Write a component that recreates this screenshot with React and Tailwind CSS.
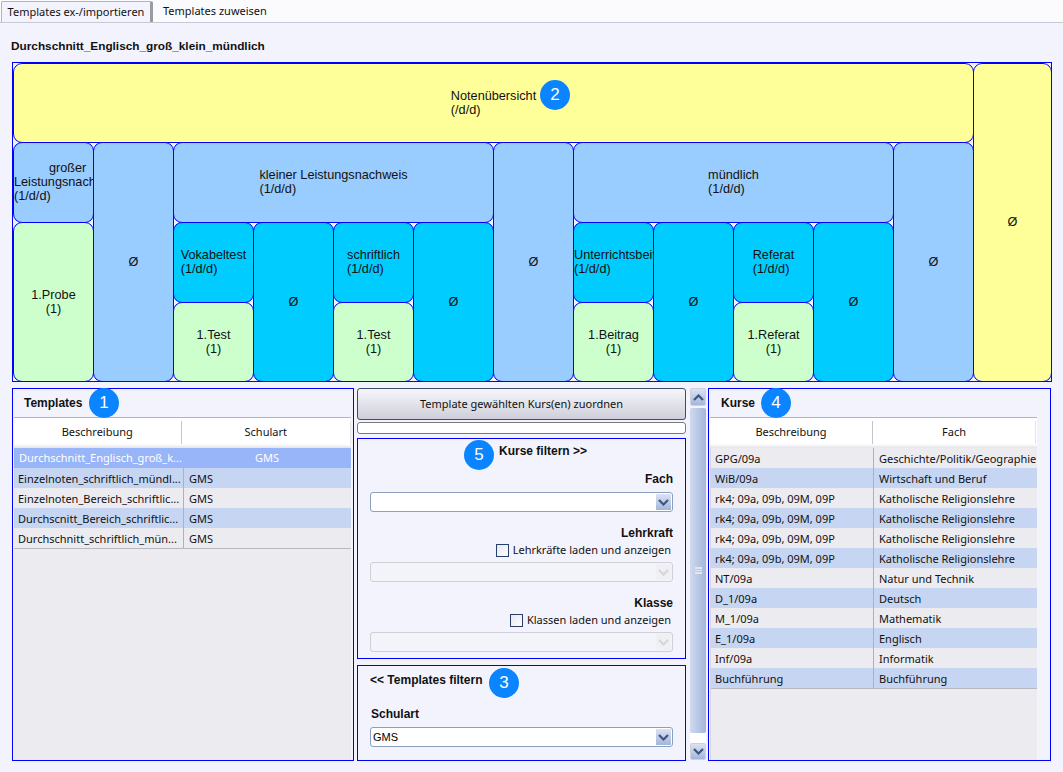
import React from "react"

const cells = [
  { lines: ["Notenübersicht", "(/d/d)"], pos: "col-start-1 col-end-13 row-start-1", bg: "bg-[#ffff99]" },
  { lines: ["Ø"], pos: "col-start-13 row-start-1 row-end-5", bg: "bg-[#ffff99]", center: true },
  { lines: ["großer", "Leistungsnachweis", "(1/d/d)"], pos: "col-start-1 row-start-2", bg: "bg-[#99ccff]", clip: true, first: true },
  { lines: ["Ø"], pos: "col-start-2 row-start-2 row-end-5", bg: "bg-[#99ccff]", center: true },
  { lines: ["kleiner Leistungsnachweis", "(1/d/d)"], pos: "col-start-3 col-end-7 row-start-2", bg: "bg-[#99ccff]" },
  { lines: ["Ø"], pos: "col-start-7 row-start-2 row-end-5", bg: "bg-[#99ccff]", center: true },
  { lines: ["mündlich", "(1/d/d)"], pos: "col-start-8 col-end-12 row-start-2", bg: "bg-[#99ccff]" },
  { lines: ["Ø"], pos: "col-start-12 row-start-2 row-end-5", bg: "bg-[#99ccff]", center: true },
  { lines: ["1.Probe", "(1)"], pos: "col-start-1 row-start-3 row-end-5", bg: "bg-[#ccffcc]", center: true },
  { lines: ["Vokabeltest", "(1/d/d)"], pos: "col-start-3 row-start-3", bg: "bg-[#00ccff]" },
  { lines: ["Ø"], pos: "col-start-4 row-start-3 row-end-5", bg: "bg-[#00ccff]", center: true },
  { lines: ["schriftlich", "(1/d/d)"], pos: "col-start-5 row-start-3", bg: "bg-[#00ccff]" },
  { lines: ["Ø"], pos: "col-start-6 row-start-3 row-end-5", bg: "bg-[#00ccff]", center: true },
  { lines: ["Unterrichtsbeitrag", "(1/d/d)"], pos: "col-start-8 row-start-3", bg: "bg-[#00ccff]", clip: true },
  { lines: ["Ø"], pos: "col-start-9 row-start-3 row-end-5", bg: "bg-[#00ccff]", center: true },
  { lines: ["Referat", "(1/d/d)"], pos: "col-start-10 row-start-3", bg: "bg-[#00ccff]" },
  { lines: ["Ø"], pos: "col-start-11 row-start-3 row-end-5", bg: "bg-[#00ccff]", center: true },
  { lines: ["1.Test", "(1)"], pos: "col-start-3 row-start-4", bg: "bg-[#ccffcc]", center: true },
  { lines: ["1.Test", "(1)"], pos: "col-start-5 row-start-4", bg: "bg-[#ccffcc]", center: true },
  { lines: ["1.Beitrag", "(1)"], pos: "col-start-8 row-start-4", bg: "bg-[#ccffcc]", center: true },
  { lines: ["1.Referat", "(1)"], pos: "col-start-10 row-start-4", bg: "bg-[#ccffcc]", center: true },
]

const templates = [
  ["Einzelnoten_schriftlich_mündl...", "GMS"],
  ["Einzelnoten_Bereich_schriftlic...", "GMS"],
  ["Durchscnitt_Bereich_schriftlic...", "GMS"],
  ["Durchschnitt_schriftlich_mün...", "GMS"],
]

const kurse = [
  ["GPG/09a", "Geschichte/Politik/Geographie"],
  ["WiB/09a", "Wirtschaft und Beruf"],
  ["rk4; 09a, 09b, 09M, 09P", "Katholische Religionslehre"],
  ["rk4; 09a, 09b, 09M, 09P", "Katholische Religionslehre"],
  ["rk4; 09a, 09b, 09M, 09P", "Katholische Religionslehre"],
  ["rk4; 09a, 09b, 09M, 09P", "Katholische Religionslehre"],
  ["NT/09a", "Natur und Technik"],
  ["D_1/09a", "Deutsch"],
  ["M_1/09a", "Mathematik"],
  ["E_1/09a", "Englisch"],
  ["Inf/09a", "Informatik"],
  ["Buchführung", "Buchführung"],
]

function Badge({ n, className }) {
  return (
    <div className={"absolute flex h-[30px] w-[30px] items-center justify-center rounded-full bg-[#0a84ff] font-['Liberation_Sans',sans-serif] text-[17px] font-normal text-white " + className}>
      {n}
    </div>
  )
}

function Chevron({ up, color = "#3f5580" }) {
  return (
    <svg width="11" height="7" viewBox="0 0 11 7">
      <polyline points={up ? "1,6 5.5,1.5 10,6" : "1,1 5.5,5.5 10,1"} fill="none" stroke={color} strokeWidth="2.2" />
    </svg>
  )
}

function Select({ value, disabled }) {
  return (
    <div className={disabled
      ? "flex h-5 w-[303px] items-center justify-end rounded-[3px] border border-[#cfcfd8] bg-[#f3f3fa] pr-px"
      : "flex h-5 w-[303px] items-center justify-between rounded-[3px] border border-[#8ba0c0] bg-white pr-px"}>
      <span className="pl-[2px] font-['Liberation_Sans',sans-serif] text-[11px] font-normal text-black">{value}</span>
      <div className={disabled
        ? "flex h-[16px] w-[15px] items-center justify-center bg-[#f0f0f4]"
        : "flex h-[16px] w-[15px] items-center justify-center bg-gradient-to-b from-[#dbe3f3] to-[#a4b6da]"}>
        <Chevron color={disabled ? "#d4d4dc" : "#3f5580"} />
      </div>
    </div>
  )
}

function TableHead({ first, second, firstW, secondW }) {
  return (
    <div className="flex h-[31px] border-t border-[#b4b4c0] bg-white pt-[3px] text-[11px] shadow-[inset_0_-4px_3px_-2px_#e4e4ea]">
      <div className={"flex h-[23px] items-center justify-center border-r border-[#c4c4cc] " + firstW}>{first}</div>
      <div className={"flex h-[23px] items-center justify-center border-r border-[#e4e4ea] " + secondW}>{second}</div>
    </div>
  )
}

function Row({ a, b, odd, firstW, padA }) {
  return (
    <div className={odd ? "flex h-5 items-center bg-[#ecebf0]" : "flex h-5 items-center bg-[#c6d6f2]"}>
      <div className={"flex h-5 items-center overflow-hidden whitespace-nowrap border-r border-[#b0b0b8] pt-[2px] " + padA + " " + firstW}>{a}</div>
      <div className="flex h-5 flex-1 items-center overflow-hidden whitespace-nowrap pl-[5px] pt-[2px]">{b}</div>
    </div>
  )
}

function Cell({ cell }) {
  const justify = cell.center ? "justify-center text-center" : cell.clip ? "justify-start" : "justify-center"
  return (
    <div className={"-mb-px -mr-px flex items-center overflow-hidden rounded-[9px] border border-[#0000ff] pb-px text-[12.7px] leading-[14px] text-[#111] " + cell.pos + " " + cell.bg + " " + justify}>
      <div className="shrink-0 whitespace-pre">
        {cell.lines.map((line, i) => (
          <div key={i} className={cell.first && i === 0 ? "text-center" : ""}>{line}</div>
        ))}
      </div>
    </div>
  )
}

export default function App() {
  return (
    <div className="relative flex h-[772px] w-[1063px] flex-col overflow-hidden bg-[#f3f3fd] font-['Noto_Sans',sans-serif] text-[11px] text-[#111]">
      {/* tabs */}
      <div className="flex h-[23px] items-end border-b border-[#c9c9d6] bg-[#fbfbfd] pl-px">
        <div className="flex h-[21px] w-[152px] items-center justify-center whitespace-nowrap rounded-t-[2px] border border-b-0 border-[#b4b4bc] border-r-[3px] border-r-[#9a9aa2] bg-[#f3f3fd] text-[11px]">
          Templates ex-/importieren
        </div>
        <div className="flex h-[21px] items-center pl-[10px] text-[11px]">Templates zuweisen</div>
      </div>

      <div className="pl-[11px] pt-[16px] font-['Liberation_Sans',sans-serif] text-[11.8px] font-bold leading-[14px]">
        Durchschnitt_Englisch_groß_klein_mündlich
      </div>

      {/* notenbaum */}
      <div className="relative ml-3 mt-[9px] h-[320px] w-[1040px] overflow-hidden border border-[#0000ff] font-['Liberation_Sans',sans-serif]">
        <div className="grid h-full grid-cols-[repeat(12,80px)_1fr] grid-rows-[79px_80px_80px_79px] pb-px">
          {cells.map((cell, i) => (
            <Cell key={i} cell={cell} />
          ))}
        </div>
        <Badge n="2" className="left-[527px] top-[17px]" />
      </div>

      <div className="ml-3 mt-[6px] flex h-[373px] items-stretch">
        {/* templates */}
        <div className="relative flex w-[342px] flex-col border border-[#0000ff] pl-px pr-[2px]">
          <div className="flex h-[28px] items-center pl-[10px] font-['Liberation_Sans',sans-serif] text-[12px] font-bold">Templates</div>
          <TableHead first="Beschreibung" second="Schulart" firstW="w-[168px]" secondW="w-[170px]" />
          <div className="flex-1 bg-[#ecebf0] text-[11px]">
            <div className="flex h-5 items-center bg-[#97b5f8] text-white">
              <div className="w-[169px] overflow-hidden whitespace-nowrap pl-[5px]">Durchschnitt_Englisch_groß_k...</div>
              <div className="flex-1 text-center">GMS</div>
            </div>
            {templates.map((t, i) => (
              <Row key={i} a={t[0]} b={t[1]} odd={i % 2 === 1} firstW="w-[170px]" padA="pl-[4px]" />
            ))}
            <div className="h-px bg-[#b8b8c0]" />
          </div>
          <Badge n="1" className="left-[76px] top-[-1px]" />
        </div>

        {/* mitte */}
        <div className="ml-[3px] flex w-[329px] flex-col">
          <div className="flex h-8 items-center justify-center rounded-[3px] border border-[#3c4c70] bg-gradient-to-b from-[#f6f6fa] to-[#cfcfdb] text-[11px]">
            Template gewählten Kurs(en) zuordnen
          </div>
          <div className="mt-[2px] h-3 rounded-[3px] border border-[#7a7a7a] bg-white" />
          <div className="relative mt-[4px] flex h-[221px] flex-col items-end border border-[#0000ff] pr-3 font-['Liberation_Sans',sans-serif] text-[12px] font-bold leading-[14px]">
            <div className="mt-[5px] w-full pl-[141px]">Kurse filtern &gt;&gt;</div>
            <div className="mt-[14px]">Fach</div>
            <div className="mt-[6px]"><Select value="" /></div>
            <div className="mt-[14px]">Lehrkraft</div>
            <label className="mt-[3px] flex items-center gap-[4px] pr-[2px] font-['Noto_Sans',sans-serif] text-[11px] font-normal">
              <span className="h-[13px] w-[13px] border border-[#2a3f66] bg-gradient-to-br from-[#e6e6ee] to-white" />
              Lehrkräfte laden und anzeigen
            </label>
            <div className="mt-[5px]"><Select value="" disabled /></div>
            <div className="mt-[14px]">Klasse</div>
            <label className="mt-[3px] flex items-center gap-[4px] pr-[2px] font-['Noto_Sans',sans-serif] text-[11px] font-normal">
              <span className="h-[13px] w-[13px] border border-[#2a3f66] bg-gradient-to-br from-[#e6e6ee] to-white" />
              Klassen laden und anzeigen
            </label>
            <div className="mt-[5px]"><Select value="" disabled /></div>
            <Badge n="5" className="left-[106px] top-[1px]" />
          </div>
          <div className="relative mt-[6px] flex flex-1 flex-col border border-[#0000ff] pl-3 font-['Liberation_Sans',sans-serif] text-[12px] font-bold leading-[14px]">
            <div className="mt-[7px]">&lt;&lt; Templates filtern</div>
            <div className="ml-px mt-[20px]">Schulart</div>
            <div className="mt-[6px]"><Select value="GMS" /></div>
            <Badge n="3" className="left-[131px] top-[2px]" />
          </div>
        </div>

        {/* scrollbar */}
        <div className="ml-1 flex w-4 flex-col">
          <div className="flex h-[18px] items-center justify-center rounded-[2px] border border-[#d0d0da] bg-gradient-to-b from-[#dbe3f3] to-[#a4b6da]">
            <Chevron up />
          </div>
          <div className="mt-[2px] flex h-[325px] items-center justify-center rounded-[2px] bg-gradient-to-r from-[#cfdaf0] to-[#a4b6da]">
            <div className="h-[7px] w-[7px] border-y border-[#dfe5f3] bg-[linear-gradient(#dfe5f3_1px,transparent_1px)] bg-[length:100%_2px]" />
          </div>
          <div className="h-[10px] bg-white" />
          <div className="flex h-[17px] items-center justify-center rounded-[2px] border border-[#d0d0da] bg-gradient-to-b from-[#dbe3f3] to-[#a4b6da]">
            <Chevron />
          </div>
        </div>

        {/* kurse */}
        <div className="relative ml-[2px] flex w-[343px] flex-col border border-[#0000ff] pl-px pr-[13px]">
          <div className="flex h-[28px] items-center pl-[11px] font-['Liberation_Sans',sans-serif] text-[12px] font-bold">Kurse</div>
          <TableHead first="Beschreibung" second="Fach" firstW="w-[163px]" secondW="w-[163px]" />
          <div className="flex-1 border-l border-[#d8d8e0] bg-[#ecebf0] text-[11px]">
            {kurse.map((k, i) => (
              <Row key={i} a={k[0]} b={k[1]} odd={i % 2 === 0} firstW="w-[163px]" padA="pl-[4px]" />
            ))}
            <div className="h-px bg-[#b8b8c0]" />
          </div>
          <Badge n="4" className="left-[52px] top-[-1px]" />
        </div>
      </div>
    </div>
  )
}
